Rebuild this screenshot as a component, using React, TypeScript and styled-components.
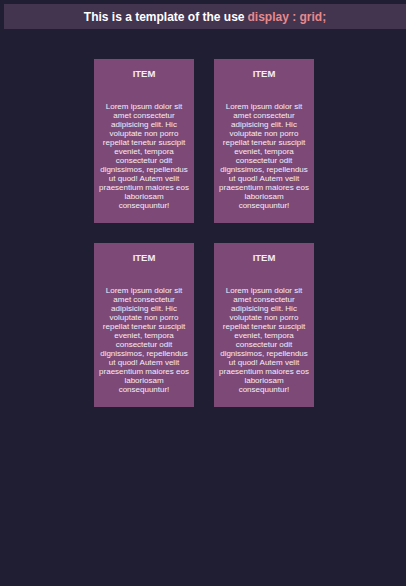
import React from "react";
import styled, { createGlobalStyle } from "styled-components";

const Global = createGlobalStyle`
  html, body { margin: 0; padding: 0; }
  body {
    background: #201e33;
    font-family: "Liberation Sans", Arial, sans-serif;
    min-height: 586px;
  }
`;

const Page = styled.div`
  padding: 4px 0 0 4px;
`;

const Header = styled.h1`
  margin: 0;
  height: 25px;
  background: #433450;
  color: #ffffff;
  font-size: 12px;
  font-weight: bold;
  display: flex;
  align-items: center;
  justify-content: center;
`;

const Code = styled.span`
  color: #e8898c;
  margin-left: 3px;
`;

const Grid = styled.div`
  width: 400px;
  margin-top: 30px;
  display: grid;
  grid-template-columns: repeat(2, 100px);
  gap: 20px;
  justify-content: center;
`;

const Card = styled.div`
  background: #7d4a78;
  height: 164px;
  box-sizing: border-box;
  padding: 9px 4px;
  text-align: center;
  color: #f6ecf5;
`;

const Title = styled.h3`
  margin: 0 0 22px;
  font-size: 9.5px;
  font-weight: bold;
  line-height: 12px;
`;

const Text = styled.p`
  margin: 0;
  font-size: 8px;
  line-height: 9px;
`;

const lorem =
  "Lorem ipsum dolor sit amet consectetur adipisicing elit. Hic voluptate non porro repellat tenetur suscipit eveniet, tempora consectetur odit dignissimos, repellendus ut quod! Autem velit praesentium maiores eos laboriosam consequuntur!";

export default function App() {
  return (
    <Page>
      <Global />
      <Header>
        This is a template of the use<Code>display : grid;</Code>
      </Header>
      <Grid>
        {[0, 1, 2, 3].map((i) => (
          <Card key={i}>
            <Title>ITEM</Title>
            <Text>{lorem}</Text>
          </Card>
        ))}
      </Grid>
    </Page>
  );
}
